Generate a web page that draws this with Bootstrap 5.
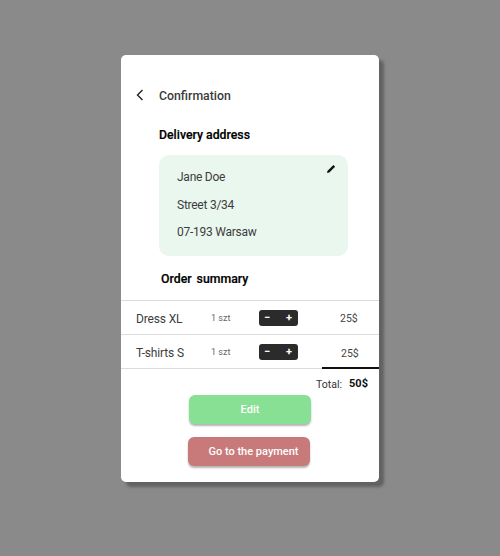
<!DOCTYPE html>
<html lang="en">
<head>
<meta charset="utf-8">
<title>Confirmation</title>
<link href="https://cdn.jsdelivr.net/npm/bootstrap@5.3.0/dist/css/bootstrap.min.css" rel="stylesheet">
<style>
html,body{height:556px;overflow:hidden}
body{background:#8a8a8a;font-family:Roboto,"Noto Sans",sans-serif;color:#333;padding:55px 121px 0}
.sheet{width:258px;height:427px;background:#fff;border-radius:5px;box-shadow:5px 5px 3px #626262;font-size:12px;overflow:hidden}
.topline{height:70px;padding-top:31px;padding-left:15px}
.topline svg{width:8px;height:12px;margin-right:15px;margin-top:3px}
.topttl{font-size:12.3px;font-weight:500;line-height:20px;color:#3a3a3a}
.h-sec{font-size:12.3px;font-weight:500;color:#000;line-height:18px;-webkit-text-stroke:.2px #000}
.h-del{padding-left:38px;height:30px;padding-top:1px}
.addr{width:189px;height:101px;margin:0 0 0 38px;background:#eaf7ef;border-radius:10px;padding:13px 18px 0;position:relative;color:#3d3d3d;font-size:12px;letter-spacing:-.25px}
.addr p{line-height:18px;margin:0 0 9.5px}
.pencil{position:absolute;right:12px;top:9px;width:10px;height:10px}
.h-ord{padding-left:40px;margin-top:14px;height:30px;word-spacing:2px}
.rowline{height:34px;border-top:1px solid #dcdcdc;display:flex;align-items:center;position:relative}
.rowline.lastr{height:35px;border-bottom:1px solid #dcdcdc}
.pname{width:75px;padding-left:15px;font-size:12px;letter-spacing:-.15px;color:#3d3d3d;white-space:nowrap;padding-top:2px}
.pqty{width:63px;padding-left:15px;font-size:9px;color:#666;white-space:nowrap;padding-top:3px}
.stepper{width:39px;height:16px;background:#2b2b2b;border-radius:3px;color:#fff;font-size:11px;font-weight:700;line-height:16px;display:flex;justify-content:space-between;padding:0 6px 0 5px}
.pprice{margin-left:auto;width:39px;font-size:10.5px;color:#444;padding-top:2px}
.lastr .pprice{width:38px;padding-top:4px}
.uline{position:absolute;right:0;bottom:-1px;width:57px;height:2px;background:#111}
.totalline{height:26px;display:flex;justify-content:flex-end;align-items:center;padding-right:11px;font-size:10.5px;color:#333;padding-top:5px}
.totalline b{font-weight:700;color:#111;margin-left:7px;font-size:11px}
.act{display:block;border:0;height:29px;border-radius:6px;color:#fff;font-size:11px;font-weight:500;box-shadow:0 2px 2px #b5b5b5;padding:1px 0 0}
.act-edit{width:122px;margin:0 0 0 68px;background:#88e094}
.act-pay{width:122px;margin:13px 0 0 67px;background:#c87a7a;padding-left:9px}
</style>
</head>
<body>
<div class="sheet">
  <div class="topline d-flex align-items-start">
    <svg viewBox="0 0 8 12"><path d="M6.5 1 1.5 6l5 5" fill="none" stroke="#222" stroke-width="1.4"/></svg>
    <span class="topttl">Confirmation</span>
  </div>
  <div class="h-sec h-del">Delivery address</div>
  <div class="addr">
    <p>Jane Doe</p><p>Street 3/34</p><p>07-193 Warsaw</p>
    <svg class="pencil" viewBox="0 0 10 10"><path d="M1 9 1.6 6.8 7.4 1l1.7 1.7-5.8 5.7z" fill="#111"/></svg>
  </div>
  <div class="h-sec h-ord">Order summary</div>
  <div class="rowline"><span class="pname">Dress XL</span><span class="pqty">1 szt</span><span class="stepper"><span>−</span><span>+</span></span><span class="pprice">25$</span></div>
  <div class="rowline lastr"><span class="pname">T-shirts S</span><span class="pqty">1 szt</span><span class="stepper"><span>−</span><span>+</span></span><span class="pprice">25$</span><span class="uline"></span></div>
  <div class="totalline"><span>Total:</span><b>50$</b></div>
  <button class="act act-edit" type="button">Edit</button>
  <button class="act act-pay" type="button">Go to the payment</button>
</div>
<script src="https://cdn.jsdelivr.net/npm/bootstrap@5.3.0/dist/js/bootstrap.bundle.min.js"></script>
</body>
</html>
